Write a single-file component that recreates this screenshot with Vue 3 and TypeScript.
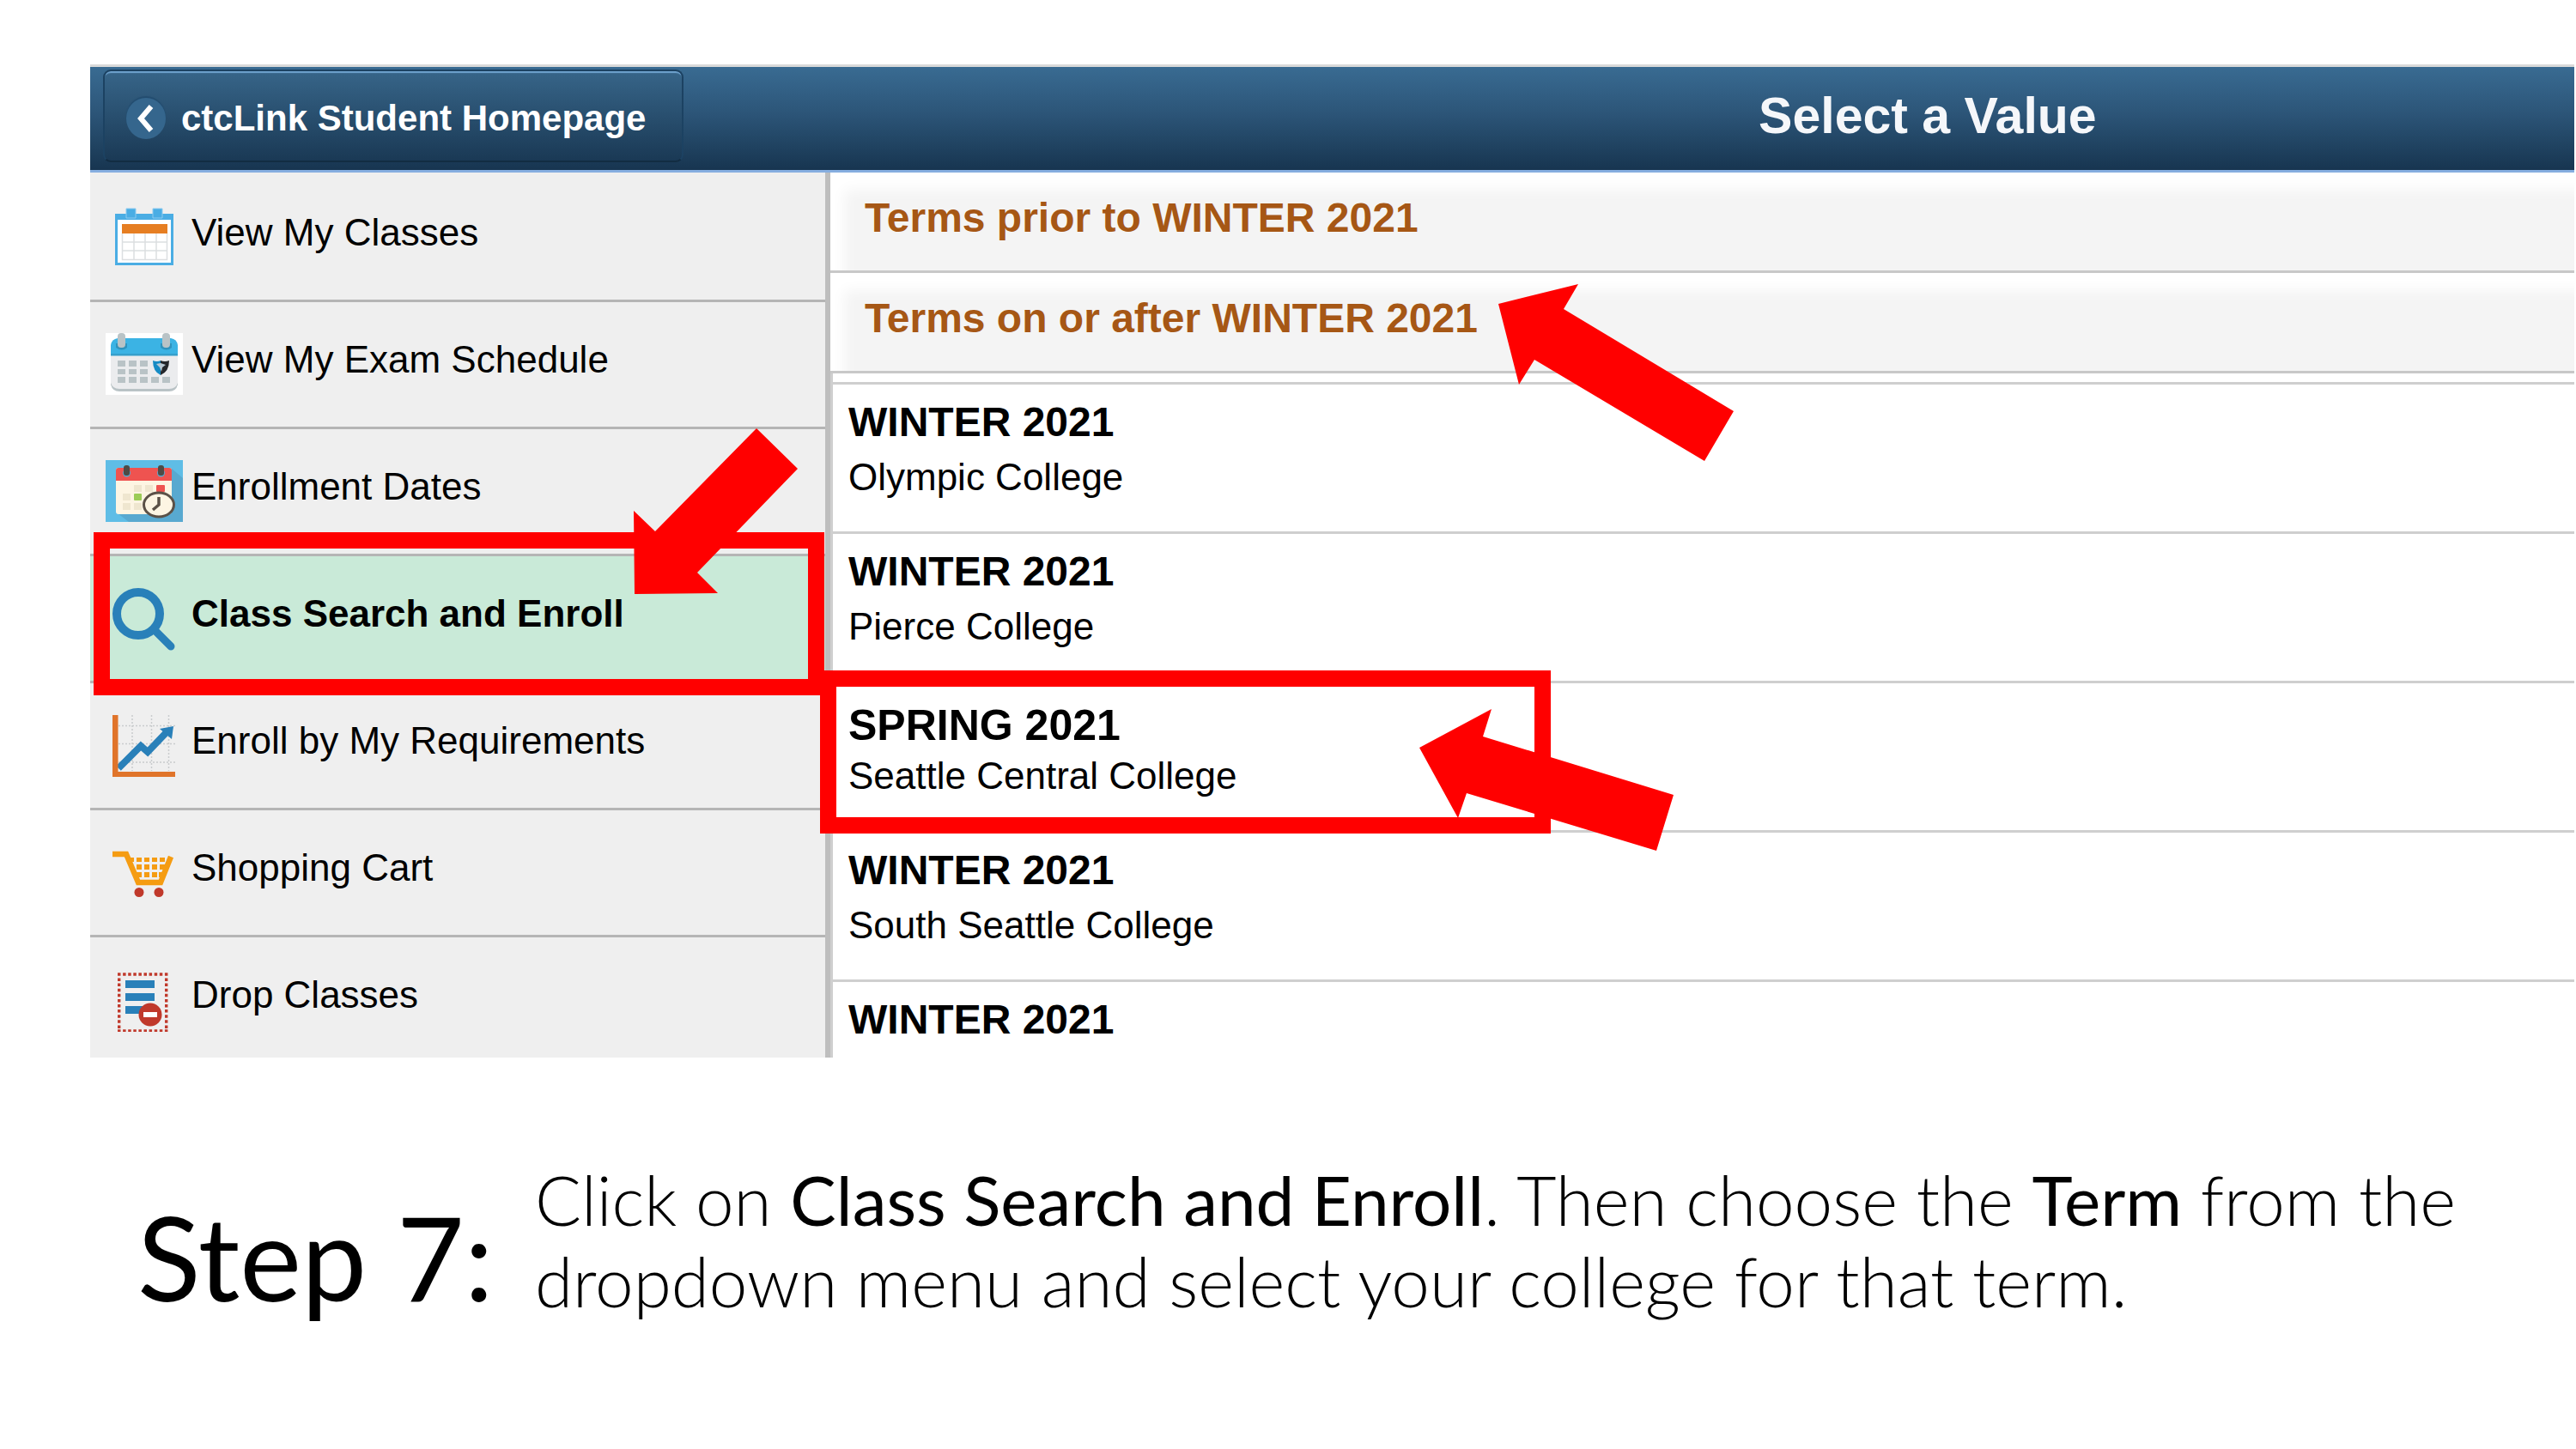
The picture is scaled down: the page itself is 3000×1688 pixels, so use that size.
<script setup lang="ts">
type IconName = 'calendar' | 'exam' | 'dates' | 'search' | 'chart' | 'cart' | 'drop'

interface NavItem {
  label: string
  icon: IconName
  active?: boolean
}

interface TermOption {
  term: string
  college?: string
  marked?: boolean
}

const navItems: NavItem[] = [
  { label: 'View My Classes', icon: 'calendar' },
  { label: 'View My Exam Schedule', icon: 'exam' },
  { label: 'Enrollment Dates', icon: 'dates' },
  { label: 'Class Search and Enroll', icon: 'search', active: true },
  { label: 'Enroll by My Requirements', icon: 'chart' },
  { label: 'Shopping Cart', icon: 'cart' },
  { label: 'Drop Classes', icon: 'drop' },
]

const groups: string[] = ['Terms prior to WINTER 2021', 'Terms on or after WINTER 2021']

const options: TermOption[] = [
  { term: 'WINTER 2021', college: 'Olympic College' },
  { term: 'WINTER 2021', college: 'Pierce College' },
  { term: 'SPRING 2021', college: 'Seattle Central College', marked: true },
  { term: 'WINTER 2021', college: 'South Seattle College' },
  { term: 'WINTER 2021' },
]
</script>

<template>
  <main class="slide">
    <section class="capture">
      <header class="bar">
        <button class="back" type="button">
          <span class="back-dot">
            <svg viewBox="0 0 46 48" width="46" height="48" aria-hidden="true">
              <path d="M29 10L17 24L29 38" fill="none" stroke="#fff" stroke-width="6" />
            </svg>
          </span>
          ctcLink Student Homepage
        </button>
        <h1 class="bar-title">Select a Value</h1>
      </header>

      <div class="panes">
        <nav class="side">
          <a
            v-for="item in navItems"
            :key="item.label"
            href="#"
            class="side-row"
            :class="{ active: item.active }"
          >
            <svg class="icon" viewBox="0 0 90 74" aria-hidden="true">
              <g v-if="item.icon === 'calendar'">
                <rect x="11" y="9" width="68" height="60" fill="#4aade4" />
                <rect x="14" y="16" width="62" height="50" fill="#fff" />
                <path d="M24 3h11v11h-11z M55 3h11v11h-11z" fill="#4aade4" stroke="#8ccbf0" />
                <rect x="19" y="21" width="53" height="11" fill="#e67e22" />
                <path d="M19.500 32V62.500H71.500V32 M33 32V62 M46 32V62 M59 32V62 M19 42H72 M19 52H72" fill="none" stroke="#dcdfe1" stroke-width="1.500" />
              </g>
              <g v-else-if="item.icon === 'exam'">
                <rect width="90" height="72" fill="#fff" />
                <path d="M6 24H84V60Q82 68 74 68H16Q8 68 6 60Z" fill="#b9c3c6" />
                <path d="M6 24H84V58Q82 65 74 65H16Q8 65 6 58Z" fill="#ebecee" />
                <path d="M6 26V14Q7 7 14 6H76Q83 7 84 14V26Z" fill="#3bb3e4" />
                <path d="M6 24H84V26.500H6Z" fill="#35a0cc" />
                <path d="M12 12h13v5q-6 5-13 0z M64 12h13v5q-6 5-13 0z" fill="#2f93bd" />
                <rect x="14" y="0" width="9" height="17" rx="4" fill="#b9c3c6" />
                <rect x="66" y="0" width="9" height="17" rx="4" fill="#b9c3c6" />
                <path d="M14 32h9v7h-9z M27 32h9v7h-9z M40 32h9v7h-9z M14 42h9v6h-9z M27 42h9v6h-9z M40 42h9v6h-9z M14 51h9v7h-9z M27 51h9v7h-9z M40 51h9v7h-9z M53 51h9v7h-9z M66 51h9v7h-9z" fill="#b9c3c6" />
                <path d="M55 32Q60 34 64 32V49Q55 45 55 32Z" fill="#168bc4" />
                <path d="M64 32Q69 34 74 32Q74 45 64 49Z" fill="#24272b" />
                <path d="M59 36L64 35L70 37L66 40L65 45L63 40Z" fill="#b9c9d4" />
              </g>
              <g v-else-if="item.icon === 'dates'">
                <rect width="90" height="72" fill="#5fbde6" />
                <path d="M77 10L90 21V72H27L14 62Z" fill="#58a9d0" />
                <rect x="12" y="9" width="65" height="54" rx="3" fill="#fdf5e3" />
                <path d="M12 24V12Q12 9 15 9H74Q77 9 77 12V24Z" fill="#ef5350" />
                <circle cx="24.500" cy="15" r="4.500" fill="#58a9d0" />
                <circle cx="64.500" cy="15" r="4.500" fill="#58a9d0" />
                <rect x="21" y="6" width="7" height="12" rx="3" fill="#4f4a45" />
                <rect x="61" y="6" width="7" height="12" rx="3" fill="#4f4a45" />
                <path d="M33 29h9v8h-9z M46 29h9v8h-9z M20 39h9v8h-9z M20 50h9v8h-9z M33 50h9v8h-9z" fill="#efe6cf" />
                <rect x="59" y="29" width="10" height="8" rx="1" fill="#ef5350" />
                <rect x="33" y="39" width="9" height="8" rx="1" fill="#9ccc57" />
                <ellipse cx="62" cy="52" rx="17.500" ry="14" fill="#fdf5e3" stroke="#5b5147" stroke-width="3" />
                <path d="M62 43V52L55 58" fill="none" stroke="#5b5147" stroke-width="3.500" />
              </g>
              <g v-else-if="item.icon === 'search'" fill="none" stroke="#2980b9">
                <circle cx="38" cy="31" r="25" stroke-width="10" />
                <path d="M56 49L76 69" stroke-width="9" stroke-linecap="round" />
              </g>
              <g v-else-if="item.icon === 'chart'">
                <path d="M31 1V66 M53.500 1V66 M73.500 1V66 M15 13.500H81 M15 34.500H81 M15 56H81" fill="none" stroke="#c9cccd" stroke-width="1.500" stroke-dasharray="2 2" />
                <path d="M15 63L41 37L49 44L71 21" fill="none" stroke="#2980b9" stroke-width="8" />
                <path d="M79 14L63 17L77 29Z" fill="#2980b9" />
                <path d="M8 1H14.500V67H81V73H8Z" fill="#e0742a" />
              </g>
              <g v-else-if="item.icon === 'cart'">
                <path d="M8 15H24L38 48H64L76 18" fill="none" stroke="#f59c12" stroke-width="6.500" />
                <path d="M28 19h5v5h-5z M36 19h6v5h-6z M45 19h6v5h-6z M54 19h6v5h-6z M63 19h6v5h-6z M36 27h6v6h-6z M45 27h6v6h-6z M54 27h6v6h-6z M63 27h6v6h-6z M36 36h6v6h-6z M45 36h6v6h-6z M54 36h6v6h-6z M62 36h5v6h-5z" fill="#f59c12" />
                <circle cx="39" cy="59.500" r="5.500" fill="#c0392b" />
                <circle cx="62" cy="59.500" r="5.500" fill="#c0392b" />
              </g>
              <g v-else>
                <path d="M14 7H72.500 M14 73H72.500 M15.700 11.500V71 M70.700 11.500V71" fill="none" stroke="#c0392b" stroke-width="3.400" stroke-dasharray="3.500 2.600" />
                <path d="M23 14h34v9h-34z M23 29h34v9h-34z M23 44h34v9h-34z" fill="#2980b9" />
                <circle cx="52" cy="54" r="13.500" fill="#c0392b" />
                <rect x="44" y="51" width="16" height="6" fill="#fff" />
              </g>
            </svg>
            <span class="side-label">{{ item.label }}</span>
          </a>
        </nav>

        <div class="values">
          <button v-for="group in groups" :key="group" class="group" type="button">{{ group }}</button>
          <div class="list">
            <a
              v-for="(option, i) in options"
              :key="i"
              href="#"
              class="option"
              :class="{ marked: option.marked }"
            >
              <strong class="term">{{ option.term }}</strong>
              <span v-if="option.college" class="college">{{ option.college }}</span>
            </a>
          </div>
        </div>
      </div>

      <svg class="marks" viewBox="0 0 2000 1157" width="2000" height="1157" aria-hidden="true">
        <g fill="none" stroke="#f00" stroke-width="19">
          <rect x="13.500" y="554.500" width="832" height="171" />
          <rect x="859.500" y="715.500" width="832" height="171" />
        </g>
        <g fill="#f00">
          <path d="M776 424L824 471L707 592L731 616L634 617L633 520L658 544Z" />
          <path d="M1640 279L1733 256L1716 285L1914 404L1880 462L1682 344L1664 373Z" />
          <path d="M1548 796L1632 751L1622 783L1844 851L1824 916L1603 849L1593 878Z" />
        </g>
      </svg>
    </section>

    <section class="caption">
      <h2 class="step">Step 7:</h2>
      <p class="text">
        Click on <b>Class Search and Enroll</b>. Then choose the <b>Term</b> from the<br />
        dropdown menu and select your college for that term.
      </p>
    </section>
  </main>
</template>

<style>
body {
  background: #fff;
}
</style>

<style scoped>
.slide {
  padding-top: 75px;
  font-family: "Liberation Sans", Arial, sans-serif;
  color: #000;
  overflow: hidden;
}

.capture {
  position: relative;
  margin: 0 2px 0 105px;
  border-top: 3px solid #d9d9d9;
}

.bar {
  display: flex;
  align-items: flex-start;
  height: 120px;
  padding: 3px 0 0 15px;
  box-sizing: border-box;
  background: linear-gradient(#396b92, #2c5578 45%, #173550);
}

.bar::after {
  content: "";
  flex: 4;
}

.back {
  display: flex;
  align-items: center;
  gap: 18px;
  box-sizing: border-box;
  height: 108px;
  padding: 6px 42px 0 25px;
  border: 2px solid #1c4262;
  border-bottom-color: #122c42;
  border-radius: 9px;
  background: linear-gradient(#376589, #1a3955);
  box-shadow: inset 0 3px 1px -1px #6fa3cf;
  font: bold 42px/48px "Liberation Sans", Arial, sans-serif;
  color: #fff;
  white-space: nowrap;
}

.back-dot {
  width: 46px;
  height: 48px;
  border-radius: 50%;
  background: #35668d;
  box-shadow: 0 -2px 1px #234d70;
}

.back-dot svg {
  display: block;
}

.bar-title {
  display: flex;
  flex: 9 0 auto;
  justify-content: flex-end;
  margin: 0;
  font-size: 59px;
  line-height: 108px;
  color: #f5f7fa;
}

.panes {
  display: flex;
  border-top: 3px solid #86aee0;
}

.side {
  flex: none;
  display: flex;
  flex-direction: column;
  width: 856px;
  padding-top: 3px;
  background: #efefef;
}

.side-row {
  display: flex;
  gap: 10px;
  box-sizing: border-box;
  height: 148px;
  padding: 36px 0 0 18px;
  border-bottom: 3px solid #b5b5b5;
  font-size: 44px;
  line-height: 62px;
  color: #000;
  text-decoration: none;
}

.side-row:last-child {
  height: 140px;
  border-bottom: 0;
}

.side-row.active {
  background: #c9ead8;
  font-weight: bold;
}

.icon {
  flex: none;
  width: 90px;
  height: 74px;
}

.values {
  flex: 1;
  display: flex;
  flex-direction: column;
  border-left: 6px solid #bebebe;
}

.group {
  box-sizing: border-box;
  height: 117px;
  padding: 0 0 8px 40px;
  border: 0;
  border-bottom: 3px solid #c8c8c8;
  background: #f4f4f4;
  box-shadow: inset 16px 20px 16px #fff;
  font: bold 48px/64px "Liberation Sans", Arial, sans-serif;
  color: #a65715;
  text-align: left;
}

.list {
  flex: 1;
  border-left: 3px solid #cfcfcf;
  padding-top: 10px;
}

.option {
  display: flex;
  flex-direction: column;
  box-sizing: border-box;
  height: 174px;
  padding: 12px 0 0 18px;
  border-top: 3px solid #cfcfcf;
  font-size: 44px;
  line-height: 64px;
  color: #000;
  text-decoration: none;
}

.option:last-child {
  height: auto;
}

.term {
  font-size: 48px;
}

.option.marked {
  padding-top: 22px;
}

.option.marked .term {
  font-size: 50px;
  line-height: 54px;
}

.marks {
  position: absolute;
  top: -3px;
  left: 0;
}

.caption {
  display: flex;
  align-items: flex-start;
  gap: 48px;
  padding: 118px 100px 120px 160px;
  font-family: Lato, Carlito, sans-serif;
}

.step {
  flex: none;
  margin: 0;
  padding-top: 34px;
  font-size: 136px;
  font-weight: 400;
  line-height: 160px;
}

.text {
  margin: 0;
  font-size: 80px;
  font-weight: 300;
  line-height: 95px;
}

.text b {
  font-weight: 400;
}
</style>
